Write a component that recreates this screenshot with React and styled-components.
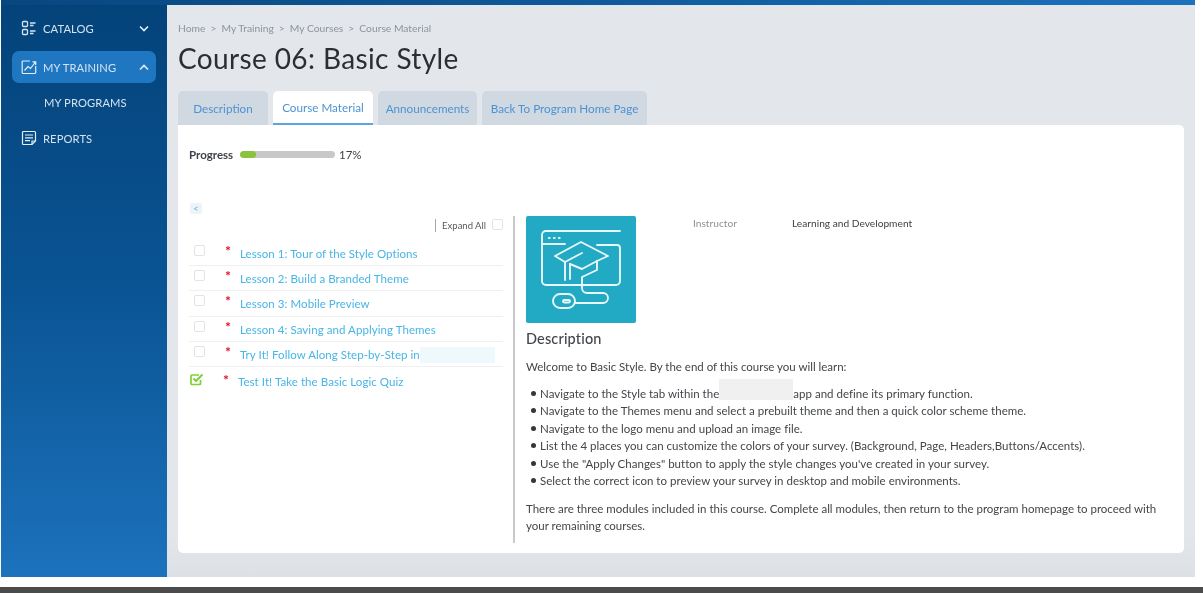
import React from "react";
import styled, { createGlobalStyle } from "styled-components";

const Global = createGlobalStyle`
  html, body { margin: 0; padding: 0; background: #fff; }
  body { font-family: "Lato", "Open Sans", sans-serif; }
  * { box-sizing: border-box; }
`;

const Page = styled.div`
  width: 1203px; height: 593px; overflow: hidden; background: #fff;
  display: flex; flex-direction: column; filter: blur(0.3px);
`;
const Frame = styled.div`
  width: 1194px; height: 577px; margin-left: 1px; display: flex; flex-direction: column;
`;
const TopBar = styled.div`
  height: 5px; flex: none;
  background: linear-gradient(90deg, #08467f 0%, #0f5a9c 50%, #1c72bd 100%);
`;
const Body = styled.div`flex: 1; display: flex; min-height: 0;`;
const Sidebar = styled.nav`
  width: 166px; flex: none; padding: 7px 11px 0 11px;
  background: linear-gradient(180deg, #04437a 0%, #0a5494 50%, #1c72bc 100%);
  display: flex; flex-direction: column;
`;
const NavItem = styled.div`
  height: 32px; border-radius: 7px; margin-bottom: ${p => p.$gap || 0}px;
  padding: 0 7px 0 9px; display: flex; align-items: center; gap: 6px;
  background: ${p => (p.$active ? "#1f77c2" : "transparent")};
  color: #d5e3f0; font-size: 11.2px; letter-spacing: 0.1px;
`;
const NavLabel = styled.span`flex: 1; white-space: nowrap;`;
const SubItem = styled.div`
  height: 26px; padding-left: 32px; display: flex; align-items: center;
  color: #d5e3f0; font-size: 11.2px; margin-bottom: 7px; letter-spacing: 0.1px;
`;
const Footer = styled.div`height: 6px; margin-top: 10px; background: #4b4b4b;`;

const Main = styled.main`
  flex: 1; min-width: 0; padding: 0 11px 24px 11px; display: flex; flex-direction: column;
  background: linear-gradient(180deg, #e3e6eb 0%, #e3e6eb 92%, #dde0e4 100%);
`;
const Crumbs = styled.div`
  height: 14px; margin-top: 16px; display: flex; align-items: center; gap: 5px;
  font-size: 10.3px; color: #8d949c;
`;
const Title = styled.h1`
  margin: 5px 0 14px 0; height: 37px; line-height: 37px;
  font-size: 28px; font-weight: 400; color: #2b2f33; letter-spacing: 0.38px;
`;
const Tabs = styled.div`display: flex; gap: 5px; height: 34px; flex: none;`;
const Tab = styled.div`
  width: ${p => p.$w}px; border-radius: 5px 5px 0 0; display: flex; align-items: center; justify-content: center;
  font-size: 11.7px; color: #4d93d3; white-space: nowrap;
  background: ${p => (p.$active ? "#fff" : "#d0d8e1")};
  border-bottom: ${p => (p.$active ? "2px solid #5fa5dc" : "0")};
`;
const Card = styled.section`
  flex: 1; min-height: 0; background: #fff; border-radius: 0 5px 5px 5px;
  padding: 22px 11px 10px 11px; display: flex; flex-direction: column;
`;
const ProgressRow = styled.div`
  height: 14px; display: flex; align-items: center; font-size: 11.5px; color: #3f4347;
`;
const ProgressLabel = styled.span`width: 51px; font-weight: 700;`;
const Track = styled.div`width: 95px; height: 7px; border-radius: 4px; background: #c8c8c8; overflow: hidden;`;
const Fill = styled.div`height: 100%; background: #8ac43f; border-radius: 4px;`;
const Pct = styled.span`margin-left: 4px;`;
const Columns = styled.div`flex: 1; display: flex; min-height: 0; margin-top: 55px;`;
const ListCol = styled.div`
  width: 324px; flex: none; position: relative;
  display: flex; flex-direction: column;
`;
const Back = styled.div`
  position: absolute; left: 1px; top: -13px; width: 12px; height: 11px; background: #eef3f7; border-radius: 2px;
  display: flex; align-items: center; justify-content: center; font-size: 9.5px; color: #5ab9e8;
`;
const ExpandRow = styled.div`
  width: 314px; height: 25px; padding-top: 3px; display: flex; justify-content: flex-end; align-items: flex-start;
  font-size: 9.5px; color: #55595d;
`;
const ExpandText = styled.span`
  border-left: 1px solid #a5a8ab; height: 13px; line-height: 13px; padding-left: 6px; margin-right: 6px;
`;
const Box = styled.span`
  width: 11px; height: 11px; border: 1px solid #e3e3e3; border-radius: 2px; flex: none; display: block; background: #fff;
`;
const Rows = styled.div`width: 314px;`;
const Row = styled.div`
  height: 25.2px; display: flex; align-items: flex-start; border-bottom: 1px solid #f0f0f0;
`;
const RowBox = styled.div`width: 36px; padding: 4px 0 0 5px; flex: none;`;
const Star = styled.span`
  width: 15px; flex: none; color: #e0102a; font-size: 14px; line-height: 14px; font-weight: 700; padding-top: 3px;
`;
const Lesson = styled.span`
  font-size: 11.5px; color: #48b5e5; line-height: 14px; padding-top: ${p => p.$top ?? 6}px; white-space: nowrap;
  display: flex; letter-spacing: 0.06px;
`;
const QuizRow = styled.div`
  height: 26px; display: flex; align-items: flex-start; padding-top: 3px;
`;
const QuizIcon = styled.div`width: 34px; flex: none; padding-left: 1px;`;
const Redact = styled.span`
  display: block; width: ${p => p.$w}px; height: ${p => p.$h}px; background: ${p => p.$c};
  margin-top: ${p => p.$t}px; flex: none; align-self: flex-start;
`;
const Detail = styled.div`
  flex: 1; min-width: 0; border-left: 2px solid #c9c9c9; padding-left: 11px;
  font-size: 11.5px; color: #42464a;
`;
const Head = styled.div`display: flex; align-items: flex-start;`;
const Logo = styled.div`
  width: 110px; height: 107px; background: #22a9c4; border-radius: 2px; flex: none;
  display: flex; align-items: center; justify-content: center;
`;
const Meta = styled.div`
  margin-left: 57px; margin-top: 1px; display: flex; font-size: 10.2px; line-height: 12px;
`;
const MetaKey = styled.span`width: 99px; color: #8d9297;`;
const MetaVal = styled.span`color: #3e4246;`;
const H2 = styled.h2`
  margin: 7px 0 11px 0; font-size: 14.5px; line-height: 17px; font-weight: 500; color: #42464a; letter-spacing: 0.15px;
`;
const P = styled.p`margin: 0; line-height: 17.5px; letter-spacing: -0.01px;`;
const Ul = styled.ul`margin: 9px 0 10px 0; padding: 0 0 0 5px; list-style: none;`;
const Li = styled.li`
  height: 17.5px; line-height: 17.5px; white-space: nowrap; letter-spacing: 0.02px;
  display: flex; align-items: center;
  &::before {
    content: ""; width: 5px; height: 5px; border-radius: 50%; background: #33373b; margin-right: 4px; flex: none;
  }
`;

const Lessons = [
  "Lesson 1: Tour of the Style Options",
  "Lesson 2: Build a Branded Theme",
  "Lesson 3: Mobile Preview",
  "Lesson 4: Saving and Applying Themes",
];

const CatalogIcon = () => (
  <svg width="16" height="16" viewBox="0 0 16 16" fill="none" stroke="#d5e3f0" strokeWidth="1.3">
    <rect x="1.5" y="1.5" width="5" height="5" rx="1" />
    <rect x="1.5" y="9.5" width="5" height="5" rx="1" />
    <path d="M9 3h5.5M9 5.5h3.5M9 11h5.5M9 13.5h3.5" />
  </svg>
);
const ChartIcon = () => (
  <svg width="16" height="16" viewBox="0 0 16 16" fill="none" stroke="#e2edf6" strokeWidth="1.2">
    <path d="M9 2H2.2a1 1 0 0 0-1 1v10.5a1 1 0 0 0 1 1h11.5a1 1 0 0 0 1-1V7" />
    <path d="M3.5 11.5 7 7.5l2.5 2L14.5 3M11.5 2.8h3.2V6" />
  </svg>
);
const ReportIcon = () => (
  <svg width="16" height="16" viewBox="0 0 16 16" fill="none" stroke="#e2edf6" strokeWidth="1.2">
    <path d="M11 14.5H2.5a1 1 0 0 1-1-1v-11a1 1 0 0 1 1-1h11a1 1 0 0 1 1 1V11L11 14.5Z" />
    <path d="M11 14.5V11h3.5M4 5h8M4 7.8h8M4 10.6h5" />
  </svg>
);
const Chevron = ({ up }) => (
  <svg width="10" height="7" viewBox="0 0 10 7" fill="none" stroke="#e6eff7" strokeWidth="1.6">
    <path d={up ? "M1 5.5 5 1.5l4 4" : "M1 1.5l4 4 4-4"} />
  </svg>
);
const CheckedIcon = () => (
  <svg width="14" height="13" viewBox="0 0 14 13" fill="none" stroke="#7ed03a" strokeWidth="1.7">
    <path d="M10.5 7v3.5a1 1 0 0 1-1 1H2a1 1 0 0 1-1-1V3a1 1 0 0 1 1-1h7" />
    <path d="M3.5 5.5 6 8l6.5-6.5" strokeWidth="2" />
  </svg>
);
const CourseLogo = () => (
  <svg width="110" height="107" viewBox="0 0 110 107" fill="none" stroke="#e8f7fa" strokeWidth="1.9" strokeLinecap="round" strokeLinejoin="round">
    <path d="M94 15H20a4 4 0 0 0-4 4v46a4 4 0 0 0 4 4h70a4 4 0 0 0 4-4V32a3 3 0 0 0-3-3H71" />
    <path d="M16 28h23" />
    <path d="M23 22h.6M28 22h.6M33 22h.6" strokeWidth="2.2" />
    <path d="M39 46 29 40l26-14 27 14-11 5-15 8-12-5" />
    <path d="M39 46 56 37" />
    <path d="M39 46v18M44 48v15" />
    <path d="M71 45v9l-15 7v11a5 5 0 0 0 5 5h16a5 5 0 0 1 0 10H49" />
    <rect x="27" y="78" width="22" height="14" rx="7" />
    <rect x="37" y="84" width="7" height="2.5" rx="1.2" />
  </svg>
);

export default function App() {
  return (
    <Page>
      <Global />
      <Frame>
        <TopBar />
        <Body>
          <Sidebar>
            <NavItem $gap={7}>
              <CatalogIcon /><NavLabel>CATALOG</NavLabel><Chevron />
            </NavItem>
            <NavItem $active $gap={6}>
              <ChartIcon /><NavLabel>MY TRAINING</NavLabel><Chevron up />
            </NavItem>
            <SubItem>MY PROGRAMS</SubItem>
            <NavItem>
              <ReportIcon /><NavLabel>REPORTS</NavLabel>
            </NavItem>
          </Sidebar>
          <Main>
            <Crumbs>
              <span>Home</span><span>&gt;</span><span>My Training</span><span>&gt;</span><span>My Courses</span><span>&gt;</span><span>Course Material</span>
            </Crumbs>
            <Title>Course 06: Basic Style</Title>
            <Tabs>
              <Tab $w={90}>Description</Tab>
              <Tab $w={100} $active>Course Material</Tab>
              <Tab $w={99}>Announcements</Tab>
              <Tab $w={165}>Back To Program Home Page</Tab>
            </Tabs>
            <Card>
              <ProgressRow>
                <ProgressLabel>Progress</ProgressLabel>
                <Track><Fill style={{ width: "17%" }} /></Track>
                <Pct>17%</Pct>
              </ProgressRow>
              <Columns>
                <ListCol>
                  <Back>&lt;</Back>
                  <ExpandRow>
                    <ExpandText>Expand All</ExpandText>
                    <Box />
                  </ExpandRow>
                  <Rows>
                    {Lessons.map(l => (
                      <Row key={l}>
                        <RowBox><Box /></RowBox>
                        <Star>*</Star>
                        <Lesson>{l}</Lesson>
                      </Row>
                    ))}
                    <Row>
                      <RowBox><Box /></RowBox>
                      <Star>*</Star>
                      <Lesson>
                        Try It! Follow Along Step-by-Step in
                        <Redact $w={75} $h={16} $c="#eff8fc" $t={-1} />
                      </Lesson>
                    </Row>
                    <QuizRow>
                      <QuizIcon><CheckedIcon /></QuizIcon>
                      <Star>*</Star>
                      <Lesson $top={5}>Test It! Take the Basic Logic Quiz</Lesson>
                    </QuizRow>
                  </Rows>
                </ListCol>
                <Detail>
                  <Head>
                    <Logo><CourseLogo /></Logo>
                    <Meta>
                      <MetaKey>Instructor</MetaKey>
                      <MetaVal>Learning and Development</MetaVal>
                    </Meta>
                  </Head>
                  <H2>Description</H2>
                  <P>Welcome to Basic Style. By the end of this course you will learn:</P>
                  <Ul>
                    <Li>Navigate to the Style tab within the<Redact $w={74} $h={21} $c="#f0f0f0" $t={-6} />app and define its primary function.</Li>
                    <Li>Navigate to the Themes menu and select a prebuilt theme and then a quick color scheme theme.</Li>
                    <Li>Navigate to the logo menu and upload an image file.</Li>
                    <Li>List the 4 places you can customize the colors of your survey. (Background, Page, Headers,Buttons/Accents).</Li>
                    <Li>Use the "Apply Changes" button to apply the style changes you've created in your survey.</Li>
                    <Li>Select the correct icon to preview your survey in desktop and mobile environments.</Li>
                  </Ul>
                  <P>There are three modules included in this course. Complete all modules, then return to the program homepage to proceed with your remaining courses.</P>
                </Detail>
              </Columns>
            </Card>
          </Main>
        </Body>
      </Frame>
      <Footer />
    </Page>
  );
}
